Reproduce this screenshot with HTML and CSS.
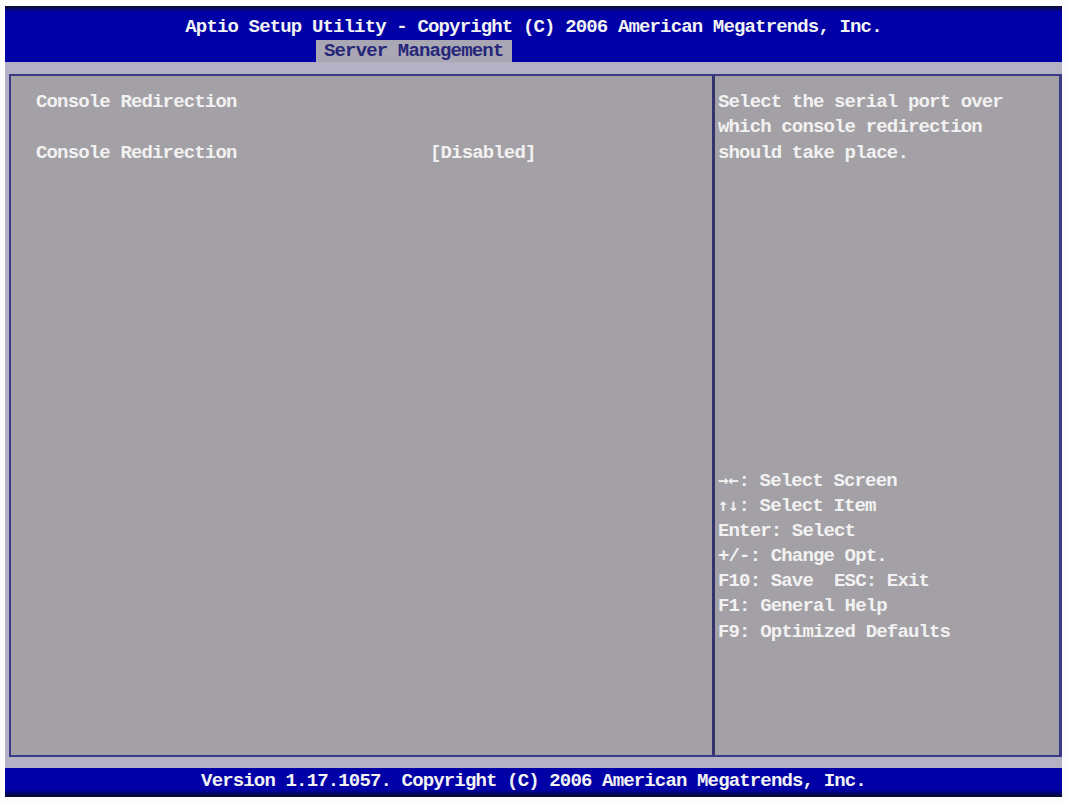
FILE: index.html
```html
<!DOCTYPE html>
<html lang="en">
<head>
    <meta charset="UTF-8">
    <title>Aptio Setup Utility - Server Management</title>
    <link rel="stylesheet" href="styles.css">
</head>
<body>
    <div class="screen">
        <div class="header">
            <div class="title">Aptio Setup Utility - Copyright (C) 2006 American Megatrends, Inc.</div>
            <div class="tabs">
                <span class="tab active">Server Management</span>
            </div>
        </div>

        <div class="frame">
            <div class="panel">
                <div class="settings">
                    <div class="row">Console Redirection</div>
                    <div class="row"></div>
                    <div class="row item">
                        <span class="label">Console Redirection</span>
                        <span class="value">[Disabled]</span>
                    </div>
                </div>
                <div class="help">
                    <div class="help-text">
                        <div class="row">Select the serial port over</div>
                        <div class="row">which console redirection</div>
                        <div class="row">should take place.</div>
                    </div>
                    <div class="keys">
                        <div class="row"><span class="arrows">&#8594;&#8592;</span>: Select Screen</div>
                        <div class="row"><span class="arrows">&#8593;&#8595;</span>: Select Item</div>
                        <div class="row">Enter: Select</div>
                        <div class="row">+/-: Change Opt.</div>
                        <div class="row">F10: Save&nbsp;&nbsp;ESC: Exit</div>
                        <div class="row">F1: General Help</div>
                        <div class="row">F9: Optimized Defaults</div>
                    </div>
                </div>
            </div>
        </div>

        <div class="footer">Version 1.17.1057. Copyright (C) 2006 American Megatrends, Inc.</div>
    </div>
</body>
</html>
```

FILE: styles.css
```css
body {
    margin: 0;
    background: #fdfdfd;
    font-family: 'Liberation Mono', 'DejaVu Sans Mono', monospace;
    font-weight: bold;
    font-size: 19px;
    letter-spacing: -0.85px;
    color: #f2f2f2;
}
.screen {
    margin: 6px 5px 0 5px;
    width: 1057px;
    height: 791px;
    display: flex;
    flex-direction: column;
    background: #b3b1c3;
}
.header {
    height: 56px;
    background: linear-gradient(#0c0c2c 0, #0000a6 6px, #0000a6 100%);
    display: flex;
    flex-direction: column;
    align-items: center;
}
.title {
    margin-top: 11px;
    line-height: 20px;
}
.tabs {
    align-self: flex-start;
    margin-top: 3px;
    margin-left: 311px;
}
.tab {
    display: inline-block;
    height: 22px;
    line-height: 22px;
    padding: 0 9px 0 8px;
}
.tab.active {
    background: #a9a7b3;
    color: #26267a;
}
.frame {
    flex: 1;
    padding: 12px 0 11px 4px;
    display: flex;
}
.panel {
    flex: 1;
    display: flex;
    border: 2px solid #3a3a86;
    border-right-width: 3px;
    background: #a4a1a6;
}
.row {
    height: 25.3px;
    line-height: 25.3px;
    white-space: pre;
}
.settings {
    width: 676px;
    padding: 14px 0 0 25px;
    border-right: 3px solid #33336e;
}
.item {
    display: flex;
}
.label {
    width: 394px;
}
.help {
    flex: 1;
    padding: 14px 0 0 3px;
    display: flex;
    flex-direction: column;
}
.keys {
    margin-top: auto;
    margin-bottom: 110px;
}
.arrows {
    font-family: 'DejaVu Sans Mono', monospace;
    font-size: 17px;
    letter-spacing: 0;
}
.footer {
    height: 29px;
    background: linear-gradient(#0000a6 0, #0000a6 22px, #0a0a28 29px);
    text-align: center;
    line-height: 26px;
}
```
